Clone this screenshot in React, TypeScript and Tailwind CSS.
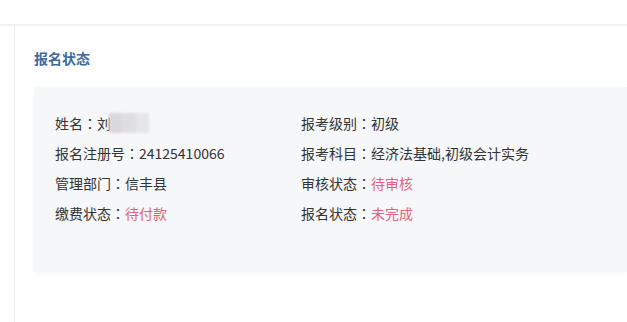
import React from "react";

const rows: [string, string, boolean][][] = [
  [
    ["姓名", "刘", false],
    ["报考级别", "初级", false],
  ],
  [
    ["报名注册号", "24125410066", false],
    ["报考科目", "经济法基础,初级会计实务", false],
  ],
  [
    ["管理部门", "信丰县", false],
    ["审核状态", "待审核", true],
  ],
  [
    ["缴费状态", "待付款", true],
    ["报名状态", "未完成", true],
  ],
];

function Item({ label, value, red, blur }: { label: string; value: string; red: boolean; blur?: boolean }) {
  return (
    <div className="flex items-center h-[30px] text-[14px] text-[#333]">
      <span>{label}</span>
      <span className="font-['Noto_Sans_CJK_TC',sans-serif]">：</span>
      <span className={red ? "text-[#e0637b]" : ""}>{value}</span>
      {blur && (
        <span className="flex h-[20px] -ml-[2px] blur-[1px]">
          <span className="w-[13px] bg-[#d9d9db]" />
          <span className="w-[14px] bg-[#dfdfe1]" />
          <span className="w-[13px] bg-[#e6e6e8]" />
        </span>
      )}
    </div>
  );
}

export default function App() {
  return (
    <div className="w-[627px] h-[322px] bg-white overflow-hidden font-['Noto_Sans_CJK_SC','Noto_Sans',sans-serif]">
      <div className="h-[26px] border-b-[2px] border-[#f0f1f3]" />
      <div className="ml-[14px] h-[296px] border-l border-[#ececee] pl-[19px]">
        <div className="h-[61px] flex items-center pt-[3px] text-[14px] font-bold text-[#3f6a9c]">
          报名状态
        </div>
        <div className="h-[185px] bg-[#f6f7f9] pl-[21px] pt-[21px] shadow-[0_2px_6px_rgba(0,0,0,0.03)]">
          {rows.map((r, i) => (
            <div key={i} className="grid grid-cols-[246px_1fr]">
              <Item label={r[0][0]} value={r[0][1]} red={r[0][2]} blur={i === 0} />
              <Item label={r[1][0]} value={r[1][1]} red={r[1][2]} />
            </div>
          ))}
        </div>
      </div>
    </div>
  );
}
